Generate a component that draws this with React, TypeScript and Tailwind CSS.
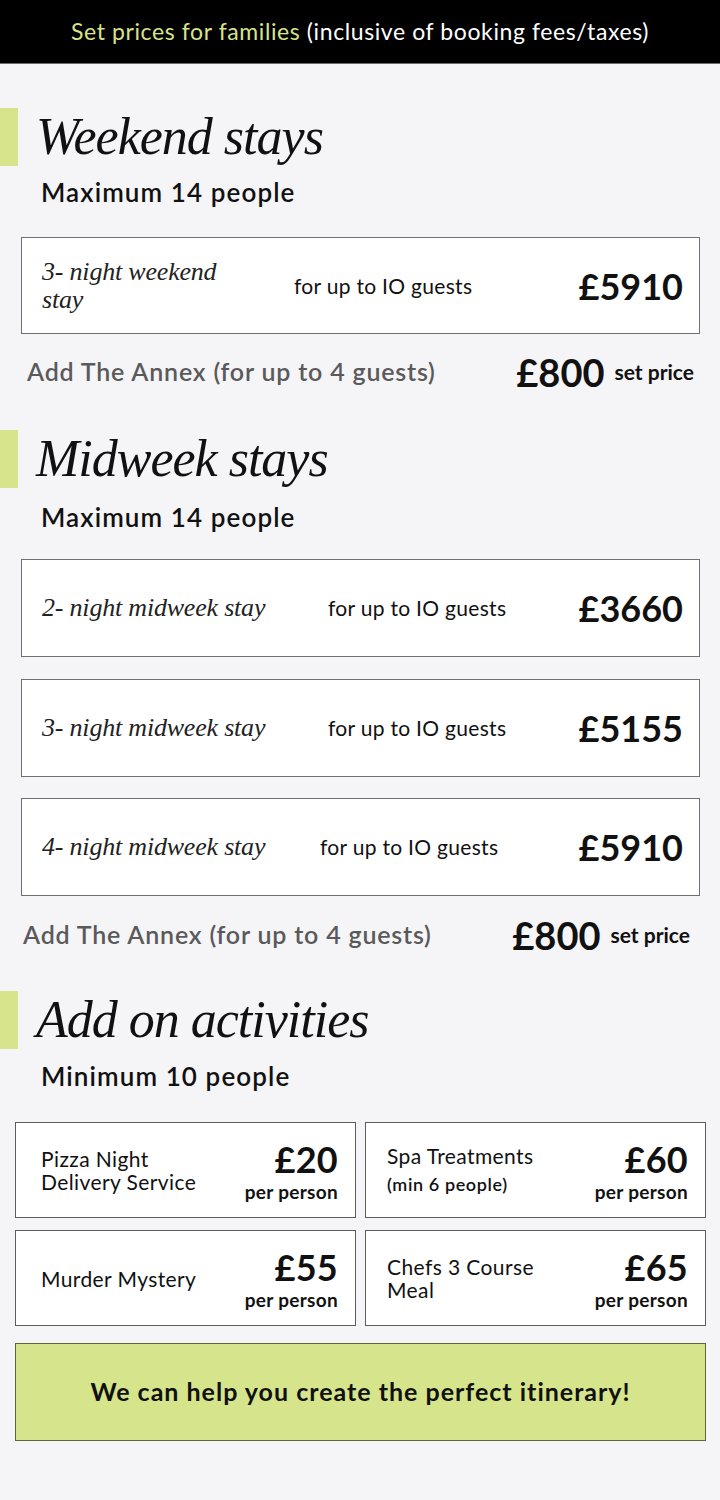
const sans = "font-['Lato',sans-serif]";
const serif = "font-['Liberation_Serif',serif] italic";

const SectionHeading = ({ title, className = '' }: { title: string; className?: string }) => (
  <div className={`flex items-center ${className}`}>
    <div className="w-[18px] h-[58px] bg-[#d7e48b] shrink-0" />
    <h2 className={`${serif} ml-[18px] text-[52px] leading-[58px] text-[#111] tracking-[-1px]`}>{title}</h2>
  </div>
);

const SubHeading = ({ text, className = '' }: { text: string; className?: string }) => (
  <p className={`${sans} ml-[41px] h-[30px] text-[26px] leading-[30px] font-semibold text-[#111] tracking-[1.1px] ${className}`}>
    {text}
  </p>
);

const StayCard = ({
  title,
  price,
  titleWidth,
  className = '',
}: {
  title: string;
  price: string;
  titleWidth: string;
  className?: string;
}) => (
  <div
    className={`mx-[21px] w-[679px] bg-white border border-[#707070] flex items-center pl-[20px] pr-[16px] ${className}`}
  >
    <div className={`${serif} ${titleWidth} text-[26px] leading-[28px] text-[#222] shrink-0 tracking-[-0.2px]`}>{title}</div>
    <div className={`${sans} text-[21px] text-[#111] tracking-[0.3px]`}>for up to IO guests</div>
    <div className={`${sans} ml-auto text-[36px] font-bold text-[#111] leading-none`}>{price}</div>
  </div>
);

const AnnexRow = ({ className = '' }: { className?: string }) => (
  <div className={`flex items-center h-[40px] ${className}`}>
    <span className={`${sans} text-[25px] font-semibold text-[#5a5a5a] tracking-[0.8px]`}>
      Add The Annex (for up to 4 guests)
    </span>
    <span className={`${sans} ml-auto text-[38px] font-bold text-[#111] leading-none`}>£800</span>
    <span className={`${sans} ml-[10px] text-[21px] font-bold text-[#111]`}>set price</span>
  </div>
);

const ActivityCard = ({
  lines,
  note,
  price,
  padLeft,
}: {
  lines: string[];
  note?: string;
  price: string;
  padLeft: string;
}) => (
  <div className={`h-[96px] bg-white border border-[#5c5c5c] flex items-center ${padLeft} pr-[17px]`}>
    <div className={`${sans} text-[21px] leading-[23px] text-[#111] tracking-[0.4px]`}>
      {lines.map((l) => (
        <div key={l}>{l}</div>
      ))}
      {note && <div className="mt-[6px] text-[18px] font-semibold tracking-[0.6px]">{note}</div>}
    </div>
    <div className={`${sans} ml-auto text-right text-[#111]`}>
      <div className="text-[36px] font-bold leading-[43px] tracking-[0.3px]">{price}</div>
      <div className="text-[19px] font-bold leading-[22px] tracking-[0.3px]">per person</div>
    </div>
  </div>
);

export default function App() {
  return (
    <div className="w-[720px] min-h-[1500px] bg-[#f5f4f7]">
      <div className="h-[64px] bg-black border-b border-[#6b6b6b] flex items-center justify-center">
        <p className={`${sans} text-[23px] text-white tracking-[0.6px]`}>
          <span className="text-[#d7e48b]">Set prices for families</span> (inclusive of booking fees/taxes)
        </p>
      </div>

      <SectionHeading title="Weekend stays" className="mt-[44px]" />
      <SubHeading text="Maximum 14 people" className="mt-[11px]" />
      <StayCard title="3- night weekend stay" price="£5910" titleWidth="w-[252px] pr-[50px]" className="mt-[30px] h-[97px]" />
      <AnnexRow className="mt-[18px] pl-[27px] pr-[26px]" />

      <SectionHeading title="Midweek stays" className="mt-[38px]" />
      <SubHeading text="Maximum 14 people" className="mt-[14px]" />
      <StayCard title="2- night midweek stay" price="£3660" titleWidth="w-[286px]" className="mt-[27px] h-[98px]" />
      <StayCard title="3- night midweek stay" price="£5155" titleWidth="w-[286px]" className="mt-[22px] h-[98px]" />
      <StayCard title="4- night midweek stay" price="£5910" titleWidth="w-[278px]" className="mt-[21px] h-[98px]" />
      <AnnexRow className="mt-[19px] pl-[23px] pr-[30px]" />

      <SectionHeading title="Add on activities" className="mt-[36px]" />
      <SubHeading text="Minimum 10 people" className="mt-[12px]" />
      <div className="mt-[31px] ml-[15px] w-[691px] grid grid-cols-2 gap-x-[9px] gap-y-[12px]">
        <ActivityCard lines={['Pizza Night', 'Delivery Service']} price="£20" padLeft="pl-[25px]" />
        <ActivityCard lines={['Spa Treatments']} note="(min 6 people)" price="£60" padLeft="pl-[21px]" />
        <ActivityCard lines={['Murder Mystery']} price="£55" padLeft="pl-[25px]" />
        <ActivityCard lines={['Chefs 3 Course', 'Meal']} price="£65" padLeft="pl-[21px]" />
      </div>

      <div className="mt-[17px] ml-[15px] w-[691px] h-[98px] bg-[#d6e48b] border border-[#5f6340] flex items-center justify-center">
        <p className={`${sans} text-[25px] font-bold text-[#111] tracking-[1px]`}>We can help you create the perfect itinerary!</p>
      </div>
    </div>
  );
}
